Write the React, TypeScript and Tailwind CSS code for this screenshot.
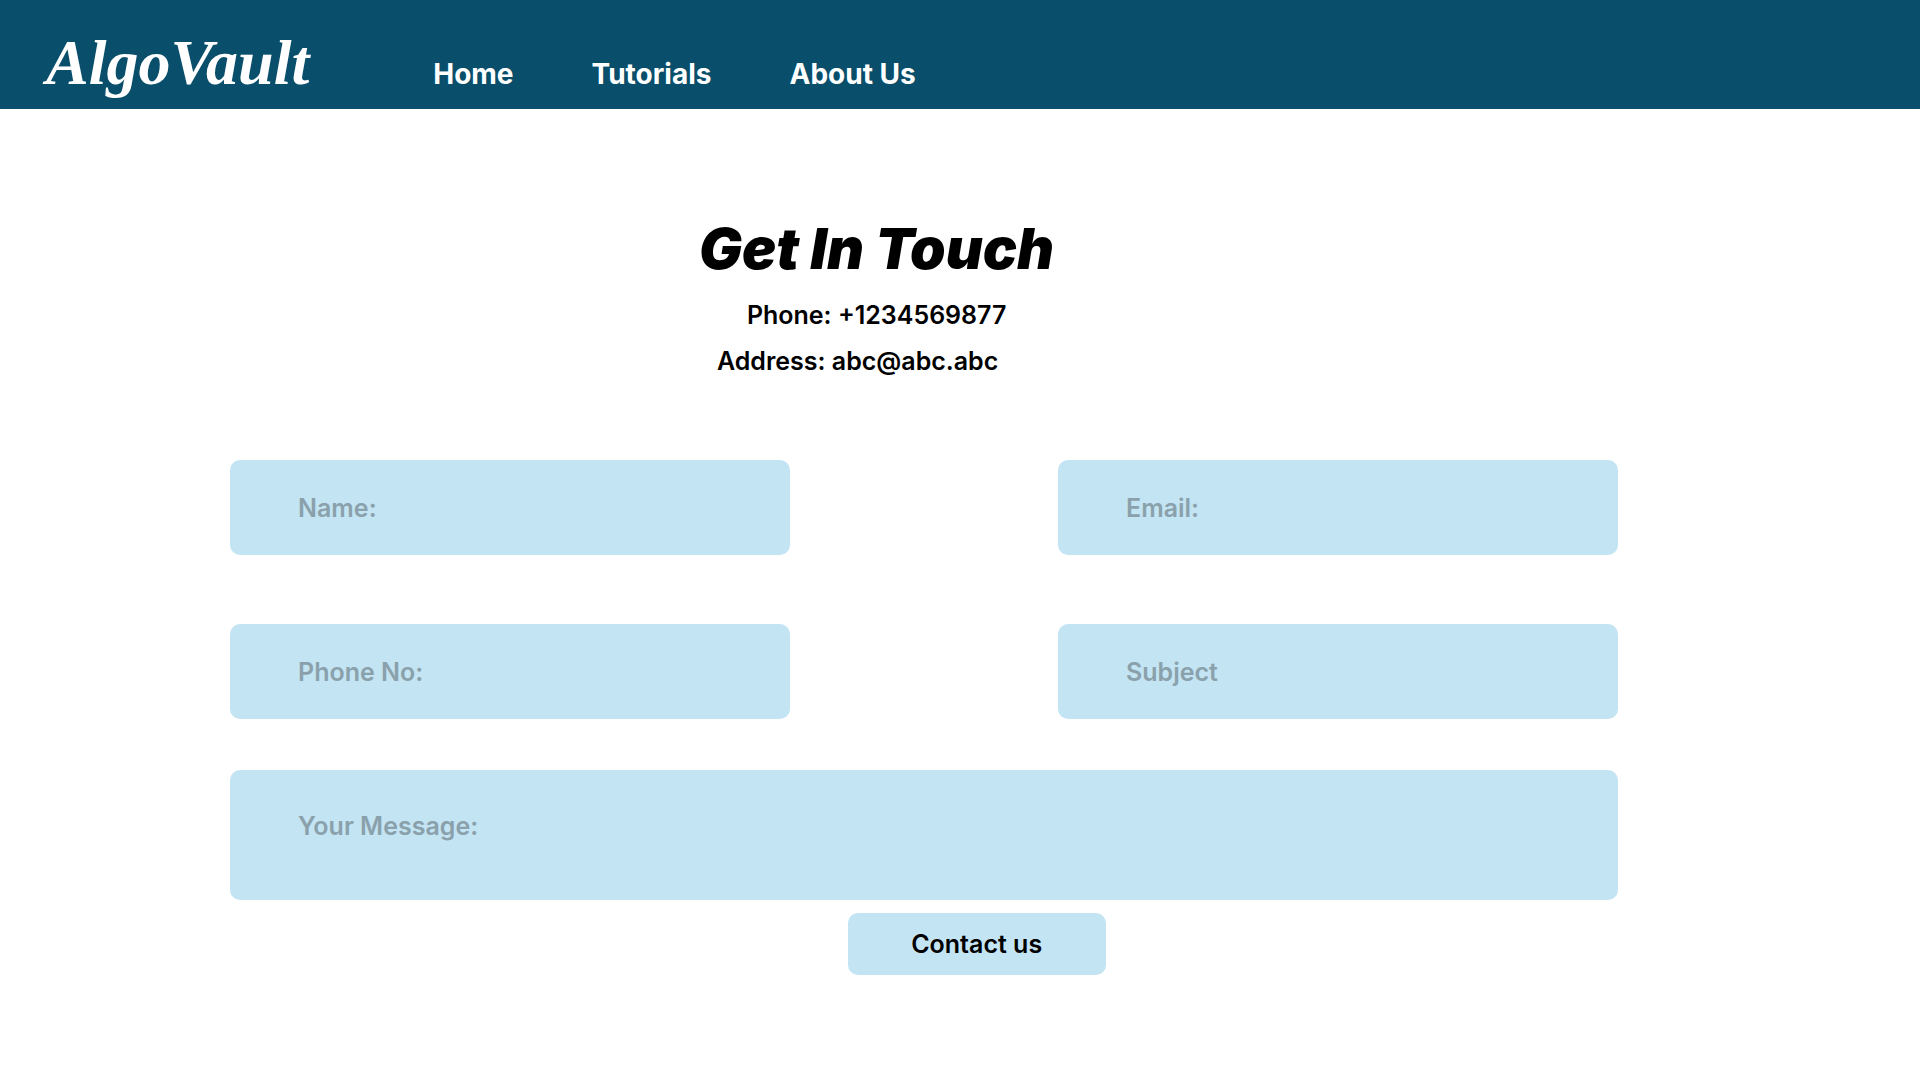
import type { FormEvent } from 'react';

const links = ['Home', 'Tutorials', 'About Us'];

const fields = [
  { id: 'name', type: 'text', label: 'Name:' },
  { id: 'email', type: 'email', label: 'Email:' },
  { id: 'phone', type: 'tel', label: 'Phone No:' },
  { id: 'subject', type: 'text', label: 'Subject' },
];

function Header() {
  return (
    <header className="flex h-[109px] items-baseline gap-[124px] bg-[#094f6b] px-[46px] pt-[27px] text-white">
      <a
        href="#"
        className="font-['Liberation_Serif',serif] text-[64px] leading-[72px] font-bold italic"
      >
        AlgoVault
      </a>
      <nav className="flex gap-[78px] text-[28px] leading-9 font-bold">
        {links.map((link) => (
          <a key={link} href="#" className="whitespace-nowrap">
            {link}
          </a>
        ))}
      </nav>
    </header>
  );
}

function ContactForm() {
  return (
    <form
      className="flex flex-col pr-[302px] pl-[230px] text-[25px] leading-[30px] font-semibold"
      onSubmit={(e: FormEvent) => e.preventDefault()}
    >
      <div className="grid grid-cols-2 gap-x-[268px] gap-y-[69px]">
        {fields.map((f) => (
          <input
            key={f.id}
            id={f.id}
            name={f.id}
            type={f.type}
            aria-label={f.label}
            placeholder={f.label}
            className="h-[95px] w-full min-w-0 rounded-[10px] bg-[#c3e4f3] px-[68px] text-black outline-none placeholder:text-[#8aa1ac]"
          />
        ))}
      </div>
      <textarea
        id="message"
        name="message"
        aria-label="Your Message:"
        placeholder="Your Message:"
        className="mt-[51px] h-[130px] w-full resize-none rounded-[10px] bg-[#c3e4f3] px-[68px] pt-[41px] text-black outline-none placeholder:text-[#8aa1ac]"
      />
      <button
        type="submit"
        className="mt-[13px] ml-[44.5%] h-[62px] w-[258px] rounded-[10px] bg-[#c3e4f3] text-black"
      >
        Contact us
      </button>
    </form>
  );
}

export default function App() {
  return (
    <div className="min-h-screen bg-white font-['Inter',sans-serif] text-black">
      <Header />
      <main>
        <section className="ml-[36.4%] pt-[104px] pb-[84px]">
          <h1 className="text-[57px] leading-[72px] font-black whitespace-nowrap italic">Get In Touch</h1>
          <div className="mt-[15px] flex flex-col items-start gap-4 text-[25px] leading-[30px] font-semibold">
            <p className="ml-[48px]">Phone: +1234569877</p>
            <p className="ml-[18px]">Address: abc@abc.abc</p>
          </div>
        </section>
        <ContactForm />
      </main>
    </div>
  );
}
